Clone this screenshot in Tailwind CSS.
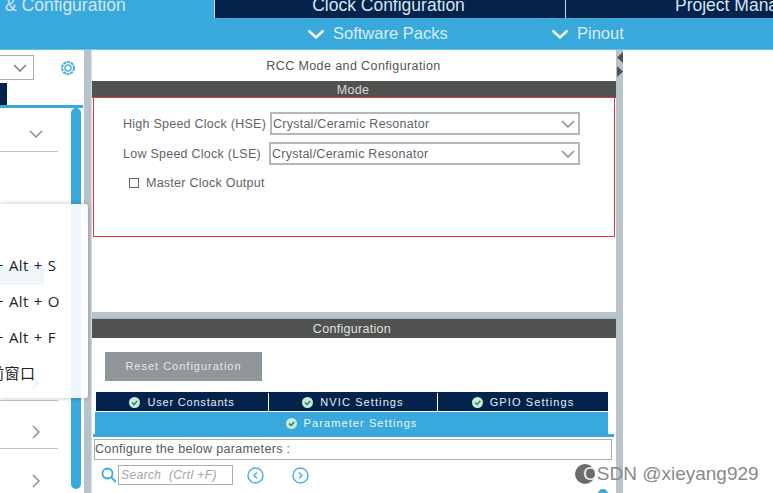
<!DOCTYPE html>
<html lang="en">
<head>
<meta charset="UTF-8">
<title>RCC Mode and Configuration</title>
<script src="https://cdn.jsdelivr.net/npm/@tailwindcss/browser@4"></script>
</head>
<body class="w-[773px] h-[493px] overflow-hidden bg-white font-['Liberation_Sans',sans-serif] relative">

  <!-- top tabs -->
  <div class="flex h-[18px] bg-[#03234b] text-[17.500px] leading-[10px] text-[#d5e6f2] overflow-hidden">
    <div class="w-[214px] shrink-0 bg-[#39a9dc] pl-[5px] whitespace-nowrap">&amp; Configuration</div>
    <div class="w-[351px] shrink-0 border-l border-[#d0d8de] text-center pr-[3px] whitespace-nowrap">Clock Configuration</div>
    <div class="w-[208px] shrink-0 border-l border-[#d0d8de] pl-[109px] whitespace-nowrap">Project Manager</div>
  </div>
  <div class="h-[32px] bg-[#39a9dc] border-b border-[#6fc0e6] text-[16.500px] text-[#d9edf8] relative flex items-center">
    <div class="flex items-center gap-[8px] ml-[307px] w-[244px]">
      <svg width="18" height="10" viewBox="0 0 18 10" fill="none" stroke="#fff" stroke-width="2.400"><path d="M1.500 1.500 9 8.500l7.500-7"/></svg>
      <span>Software Packs</span>
    </div>
    <div class="flex items-center gap-[8px]">
      <svg width="18" height="10" viewBox="0 0 18 10" fill="none" stroke="#fff" stroke-width="2.400"><path d="M1.500 1.500 9 8.500l7.500-7"/></svg>
      <span>Pinout</span>
    </div>
  </div>

  <div class="flex h-[443px]">
    <!-- left tree panel -->
    <div class="w-[84px] shrink-0 relative">
      <div class="flex items-center h-[33px] pt-[2px]">
        <div class="w-[34px] h-[25px] border border-[#a9adb0] border-l-0 flex items-center justify-end pr-[6px]">
          <svg width="14" height="8" viewBox="0 0 14 8" fill="none" stroke="#777" stroke-width="1.500"><path d="M1 1l6 6 6-6"/></svg>
        </div>
        <svg class="ml-[26px]" width="16" height="16" viewBox="0 0 16 16" fill="none" stroke="#52aede" stroke-width="1.500">
          <circle cx="8" cy="8" r="3"/>
          <circle cx="8" cy="8" r="6" stroke-width="2.200" stroke-dasharray="3 .8"/>
        </svg>
      </div>
      <div class="w-[7px] h-[22px] bg-[#03234b]"></div>
      <div class="h-[3px] bg-[#39a9dc] mr-[1px]"></div>
      <div class="flex">
        <div class="w-[71px]">
          <div class="h-[44px] pt-[8px] border-b border-[#bcc8cf] mr-[13px] flex items-center justify-end pr-[15px]">
            <svg width="14" height="8" viewBox="0 0 14 8" fill="none" stroke="#8a8f92" stroke-width="1.500"><path d="M1 1l6 6 6-6"/></svg>
          </div>
          <div class="h-[249px] border-b border-[#bcc8cf] mr-[13px]"></div>
          <div class="h-[48px] pt-[14px] border-b border-[#bcc8cf] mr-[13px] flex items-center justify-end pr-[18px]">
            <svg width="8" height="14" viewBox="0 0 8 14" fill="none" stroke="#8a8f92" stroke-width="1.500"><path d="M1 1l6 6-6 6"/></svg>
          </div>
          <div class="h-[48px] pt-[16px] mr-[13px] flex items-center justify-end pr-[18px]">
            <svg width="8" height="14" viewBox="0 0 8 14" fill="none" stroke="#8a8f92" stroke-width="1.500"><path d="M1 1l6 6-6 6"/></svg>
          </div>
        </div>
        <div class="w-[10px] h-[381px] bg-[#39a9dc] rounded-[5px]"></div>
      </div>
    </div>

    <div class="w-[8px] shrink-0 bg-[#b8c4cb] border-r border-[#d9e0e4]"></div>

    <!-- centre panel -->
    <div class="w-[524px] shrink-0 flex flex-col">
      <div class="h-[31px] pt-px flex items-center justify-center text-[12.500px] text-[#555] tracking-[0.4px] pr-[1px]">RCC Mode and Configuration</div>
      <div class="h-[17px] bg-[#505250] text-[#d8d8d8] text-[12.500px] leading-[18px] text-center pr-[2px] tracking-[0.3px]">Mode</div>

      <div class="h-[140px] mx-px border border-[#e8393c] -mt-px relative flex flex-col text-[12.500px] text-[#60646a] tracking-[0.25px]">
        <div class="flex items-center h-[23px] mt-[14px] ml-[29px]">
          <span class="w-[147px] pt-px whitespace-nowrap">High Speed Clock (HSE)</span>
          <div class="w-[310px] h-[23px] border-2 border-[#b4b8ba] flex items-center justify-between pl-[1px] pr-[3px]">
            <span class="pt-px">Crystal/Ceramic Resonator</span>
            <svg width="14" height="8" viewBox="0 0 14 8" fill="none" stroke="#8a8f92" stroke-width="1.500"><path d="M1 1l6 6 6-6"/></svg>
          </div>
        </div>
        <div class="flex items-center h-[23px] mt-[7px] ml-[29px]">
          <span class="w-[146px] pt-px whitespace-nowrap">Low Speed Clock (LSE)</span>
          <div class="w-[311px] h-[23px] border-2 border-[#b4b8ba] flex items-center justify-between pl-[1px] pr-[3px]">
            <span class="pt-px">Crystal/Ceramic Resonator</span>
            <svg width="14" height="8" viewBox="0 0 14 8" fill="none" stroke="#8a8f92" stroke-width="1.500"><path d="M1 1l6 6 6-6"/></svg>
          </div>
        </div>
        <div class="flex items-center gap-[7px] mt-[9px] ml-[35px]">
          <span class="w-[10px] h-[10px] border border-[#666]"></span>
          <span class="whitespace-nowrap">Master Clock Output</span>
        </div>
      </div>

      <div class="h-[75px]"></div>
      <div class="h-[7px] bg-[#b8c4cb] border-b border-[#a6b2b9]"></div>
      <div class="h-[19px] bg-[#505250] text-[#e0e0e0] text-[12.500px] leading-[20px] text-center pr-[4px] tracking-[0.3px]">Configuration</div>

      <div class="mt-[14px] ml-[13px] w-[157px] h-[29px] bg-[#90979b] text-[#e4e6e7] text-[11px] tracking-[1px] flex items-center justify-center">Reset Configuration</div>

      <div class="mt-[11px] ml-[4px] w-[512px] h-[19px] pt-px flex bg-[#03234b] text-[#e4ecf2] text-[11px] tracking-[1.100px]">
        <div class="w-[173px] border-r border-white flex items-center justify-center gap-[7px] tracking-[0.800px]">
          <svg width="11" height="11" viewBox="0 0 11 11"><circle cx="5.500" cy="5.500" r="5.500" fill="#c8eadb"/><path d="M3 5.500l2 2 3.200-3.600" fill="none" stroke="#1d8a5a" stroke-width="1.500"/></svg>
          <span>User Constants</span>
        </div>
        <div class="w-[169px] border-r border-white flex items-center justify-center gap-[7px]">
          <svg width="11" height="11" viewBox="0 0 11 11"><circle cx="5.500" cy="5.500" r="5.500" fill="#c8eadb"/><path d="M3 5.500l2 2 3.200-3.600" fill="none" stroke="#1d8a5a" stroke-width="1.500"/></svg>
          <span>NVIC Settings</span>
        </div>
        <div class="flex-1 flex items-center justify-center gap-[7px]">
          <svg width="11" height="11" viewBox="0 0 11 11"><circle cx="5.500" cy="5.500" r="5.500" fill="#c8eadb"/><path d="M3 5.500l2 2 3.200-3.600" fill="none" stroke="#1d8a5a" stroke-width="1.500"/></svg>
          <span>GPIO Settings</span>
        </div>
      </div>
      <div class="ml-[3px] w-[513px] h-[22px] mt-px bg-[#39a9dc] text-[#eef6fb] text-[11px] tracking-[1.100px] flex items-center justify-center gap-[7px]">
        <svg width="11" height="11" viewBox="0 0 11 11"><circle cx="5.500" cy="5.500" r="5.500" fill="#c8eadb"/><path d="M3 5.500l2 2 3.200-3.600" fill="none" stroke="#1d8a5a" stroke-width="1.500"/></svg>
        <span>Parameter Settings</span>
      </div>
      <div class="ml-[1px] w-[521px] h-[3px] bg-[#39a9dc]"></div>
      <div class="ml-[2px] w-[518px] h-[21px] mt-[2px] border border-[#a9b0b5] text-[12.500px] leading-[19px] text-[#55585c] tracking-[0.330px]">Configure the below parameters :</div>
      <div class="flex items-center mt-[5px] ml-[9px] h-[20px]">
        <svg width="16" height="16" viewBox="0 0 16 16" fill="none" stroke="#3ba8dc" stroke-width="1.800"><circle cx="6.500" cy="6.500" r="5"/><path d="M10.500 10.500 15 15"/></svg>
        <div class="w-[115px] h-[20px] ml-px border border-[#a9adb0] text-[12px] leading-[18px] italic text-[#a0a4a7] pl-[2px] tracking-[0.400px] whitespace-nowrap overflow-hidden">Search&nbsp; (Crtl +F)</div>
        <svg class="ml-[14px]" width="17" height="17" viewBox="0 0 17 17" fill="none" stroke="#52b1e0" stroke-width="1.500"><circle cx="8.500" cy="8.500" r="7.500"/><path d="M10 5.500l-3 3 3 3"/></svg>
        <svg class="ml-[28px]" width="17" height="17" viewBox="0 0 17 17" fill="none" stroke="#52b1e0" stroke-width="1.500"><circle cx="8.500" cy="8.500" r="7.500"/><path d="M7 5.500l3 3-3 3"/></svg>
      </div>
    </div>

    <!-- right splitter -->
    <div class="w-[7px] shrink-0 bg-[#b8c4cb]"></div>
    <div class="flex-1"></div>
  </div>

  <!-- splitter arrows -->
  <svg class="absolute left-[616px] top-[50px]" width="7" height="30" viewBox="0 0 7 30" fill="#505250"><path d="M7 2v11L1 7.500zM1 16v11l6-5.500z"/></svg>

  <!-- context menu over the tree -->
  <div class="absolute left-0 top-[204px] w-[88px] h-[194px] bg-white rounded-r-[3px] shadow-[0_0_5px_rgba(0,0,0,0.25)] overflow-hidden font-['Open_Sans','Noto_Sans_CJK_SC',sans-serif] text-[15px] text-[#222] tracking-[0.3px] [word-spacing:1px]">
    <div class="absolute left-[71px] top-0 w-[10px] h-full bg-[#eef6fc]"></div>
    <div class="absolute left-0 top-[62px] w-[44px] h-[19px] bg-[#eef6fc]"></div>
    <svg class="absolute left-[31px] top-[172px]" width="8" height="14" viewBox="0 0 8 14" fill="none" stroke="#eeeeee" stroke-width="1.500"><path d="M1 1l6 6-6 6"/></svg>
    <div class="absolute left-[-5px] top-[50px] whitespace-nowrap">+ Alt + S</div>
    <div class="absolute left-[-5px] top-[86px] whitespace-nowrap">+ Alt + O</div>
    <div class="absolute left-[-5px] top-[122px] whitespace-nowrap">+ Alt + F</div>
    <div class="absolute left-[-26px] top-[158px] whitespace-nowrap font-['Noto_Sans_CJK_SC',sans-serif]">当前窗口</div>
  </div>

  <div class="absolute left-[598px] top-[489px] w-[10px] h-[10px] rounded-full bg-[#39a9dc]"></div>

  <!-- watermark -->
  <div class="absolute left-[575px] top-[464px] flex items-center h-[20px] text-[19px] text-[#8a8a8a] whitespace-nowrap">
    <span class="w-[20px] h-[20px] rounded-full bg-[#6b6b6b] mr-[-12px]"></span>
    <span class="relative"><span class="text-[#eeeeee]">C</span>SDN @xieyang929</span>
  </div>
</body>
</html>
